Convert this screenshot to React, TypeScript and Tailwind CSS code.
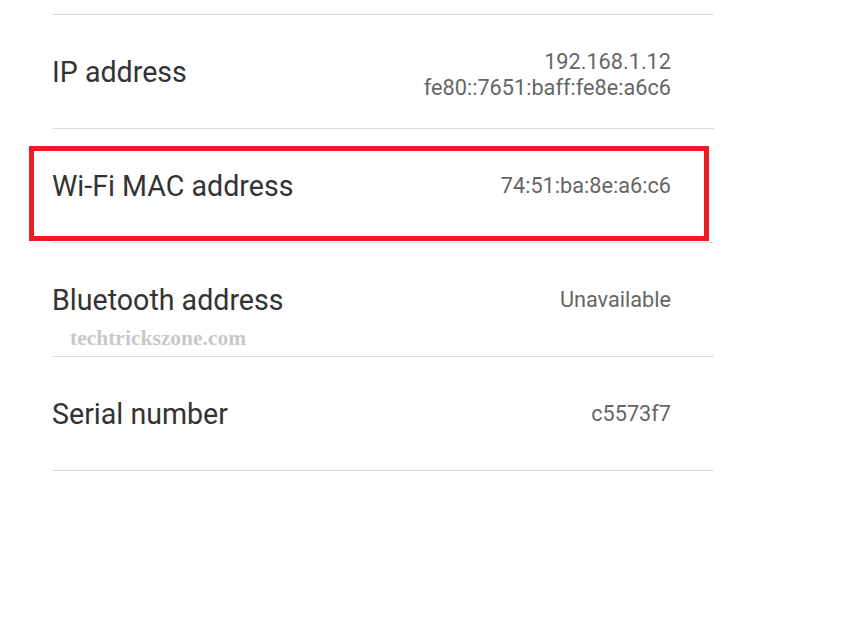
import React from 'react';

const rows: { label: string; values: string[] }[] = [
  { label: 'IP address', values: ['192.168.1.12', 'fe80::7651:baff:fe8e:a6c6'] },
  { label: 'Wi-Fi MAC address', values: ['74:51:ba:8e:a6:c6'] },
  { label: 'Bluetooth address', values: ['Unavailable'] },
  { label: 'Serial number', values: ['c5573f7'] },
];

export default function App() {
  return (
    <div className="relative w-[846px] h-[623px] bg-white overflow-hidden" style={{ fontFamily: 'Roboto, "Noto Sans", sans-serif' }}>
      <div className="pt-[14px] pl-[52px]">
        <div className="w-[662px] border-b border-[#dcdcdc]">
          {rows.map((row) => (
            <div key={row.label} className="h-[114px] border-t border-[#dcdcdc] flex items-center justify-between pr-[43px]">
              <span className="text-[28.6px] leading-[34px] text-[#333333]">{row.label}</span>
              <div
                className={
                  row.values.length > 1
                    ? 'flex flex-col items-end mt-[6px] text-[21.7px] leading-[26px] text-[#666666]'
                    : 'flex flex-col items-end text-[21.7px] leading-[26px] text-[#666666]'
                }
              >
                {row.values.map((v) => (
                  <span key={v}>{v}</span>
                ))}
              </div>
            </div>
          ))}
        </div>
      </div>

      {/* highlight box */}
      <div className="absolute left-[29px] top-[146px] w-[680px] h-[95px] border-[5px] border-[#ed1c24]" />

      {/* watermark */}
      <div
        className="absolute left-[70px] top-[322px] text-[21.5px] leading-[32px] font-bold text-[#c8c8c8]"
        style={{ fontFamily: '"Liberation Serif", serif' }}
      >
        techtrickszone.com
      </div>
    </div>
  );
}
